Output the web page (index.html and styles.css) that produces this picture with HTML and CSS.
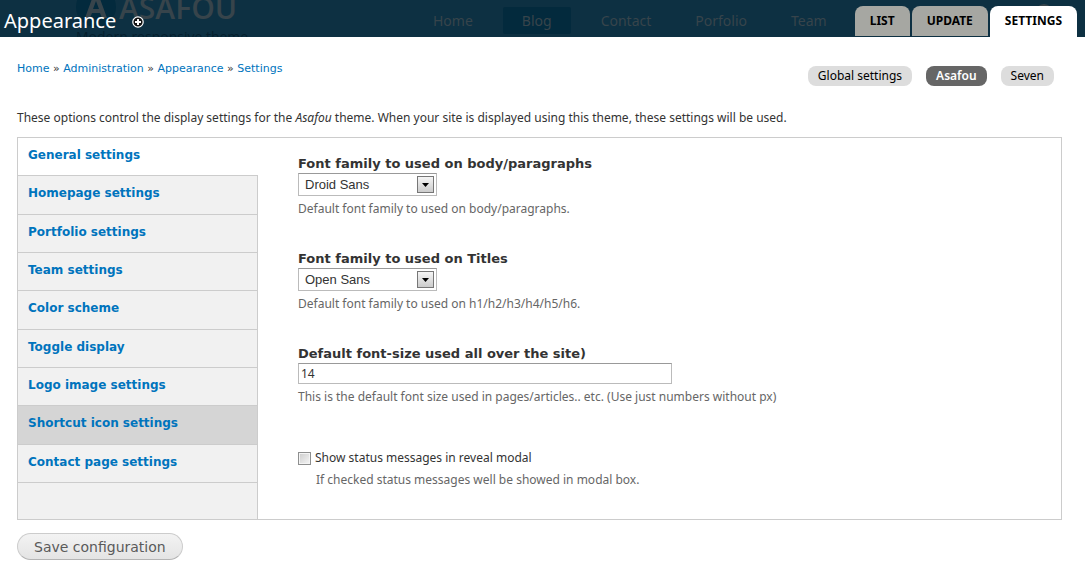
FILE: index.html
```html
<!DOCTYPE html>
<html lang="en">
<head>
<meta charset="utf-8">
<title>Appearance</title>
<meta name="viewport" content="width=device-width, initial-scale=1">
<link rel="stylesheet" href="styles.css">
</head>
<body>
<header class="branding">
  <div class="site-behind">
    <div class="site-logo">
      <svg class="logo-mark" viewBox="0 0 40 34" aria-hidden="true"><circle cx="20" cy="7" r="20" fill="#032a3d"/><path d="M9 18 17 -4H23L31 18H26L24 13H16L14 18ZM17 9H23L20 1Z" fill="#37444b"/></svg>
      <span class="logo-name">ASAFOU</span>
      <span class="slogan">Modern responsive theme</span>
    </div>
    <nav class="site-nav">
      <a href="#">Home</a>
      <a href="#" class="current">Blog</a>
      <a href="#">Contact</a>
      <a href="#">Porfolio</a>
      <a href="#">Team</a>
    </nav>
    <span class="site-dot"></span>
  </div>
  <div class="title-row">
    <h1>Appearance</h1>
    <a href="#" class="shortcut" aria-label="Add to shortcuts">
      <svg width="12" height="12" viewBox="0 0 12 12"><circle cx="6" cy="6" r="5.2" fill="#111" stroke="#fff" stroke-width="1.2"/><path d="M6 3v6M3 6h6" stroke="#fff" stroke-width="2"/></svg>
    </a>
  </div>
  <nav class="primary-tabs">
    <a href="#">LIST</a>
    <a href="#">UPDATE</a>
    <a href="#" class="active">SETTINGS</a>
  </nav>
</header>
<main class="page">
  <div class="top-row">
    <nav class="breadcrumb"><a href="#">Home</a> » <a href="#">Administration</a> » <a href="#">Appearance</a> » <a href="#">Settings</a></nav>
    <nav class="secondary-tabs">
      <a href="#">Global settings</a>
      <a href="#" class="active">Asafou</a>
      <a href="#">Seven</a>
    </nav>
  </div>
  <p class="intro">These options control the display settings for the <em>Asafou</em> theme. When your site is displayed using this theme, these settings will be used.</p>
  <form>
    <div class="vertical-tabs">
      <nav class="tab-list">
        <a href="#" class="selected">General settings</a>
        <a href="#">Homepage settings</a>
        <a href="#">Portfolio settings</a>
        <a href="#">Team settings</a>
        <a href="#">Color scheme</a>
        <a href="#">Toggle display</a>
        <a href="#">Logo image settings</a>
        <a href="#" class="hovered">Shortcut icon settings</a>
        <a href="#">Contact page settings</a>
      </nav>
      <div class="pane">
        <div class="field">
          <label for="body-font">Font family to used on body/paragraphs</label>
          <div class="select-box">
            <select id="body-font"><option>Droid Sans</option></select>
            <svg class="arrow" viewBox="0 0 15 15" aria-hidden="true"><path d="M4 6h7L7.500 10Z"/></svg>
          </div>
          <p class="description">Default font family to used on body/paragraphs.</p>
        </div>
        <div class="field">
          <label for="title-font">Font family to used on Titles</label>
          <div class="select-box">
            <select id="title-font"><option>Open Sans</option></select>
            <svg class="arrow" viewBox="0 0 15 15" aria-hidden="true"><path d="M4 6h7L7.500 10Z"/></svg>
          </div>
          <p class="description">Default font family to used on h1/h2/h3/h4/h5/h6.</p>
        </div>
        <div class="field">
          <label for="font-size">Default font-size used all over the site)</label>
          <input type="text" id="font-size" value="14">
          <p class="description">This is the default font size used in pages/articles.. etc. (Use just numbers without px)</p>
        </div>
        <div class="field check-field">
          <div class="check-row">
            <input type="checkbox" id="reveal">
            <label for="reveal">Show status messages in reveal modal</label>
          </div>
          <p class="description">If checked status messages well be showed in modal box.</p>
        </div>
      </div>
    </div>
    <button type="submit" class="save">Save configuration</button>
  </form>
</main>
</body>
</html>
```
FILE: styles.css
```css
* { box-sizing: border-box; }
body {
  margin: 0;
  background: #fff;
  color: #333;
  font: 12px/18px "Noto Sans", sans-serif;
}
a { color: #0074bd; text-decoration: none; }
p, h1 { margin: 0; }

.branding {
  position: relative;
  display: flex;
  justify-content: space-between;
  align-items: flex-end;
  height: 37px;
  padding-right: 8px;
  background: #0d3042;
  overflow: hidden;
}
.title-row { position: relative; display: flex; align-items: center; gap: 16px; padding: 0 4px 4px; }
.title-row h1 { color: #fff; font: 20px/24px "Noto Sans", sans-serif; }
.shortcut { display: flex; padding-top: 2px; }
.primary-tabs { position: relative; display: flex; gap: 2px; }
.primary-tabs a {
  height: 30px;
  margin-bottom: 1px;
  padding: 0 15px;
  border-radius: 8px 8px 0 0;
  background: #a6a7a2;
  color: #000;
  font: bold 12px/30px "Noto Sans", sans-serif;
}
.primary-tabs .active { height: 31px; margin-bottom: 0; background: #fff; }

.site-behind { position: absolute; inset: 0; font-family: "Open Sans", sans-serif; }
.site-logo { position: absolute; left: 76px; top: 0; }
.logo-mark { position: absolute; left: 0; top: 0; width: 40px; height: 34px; }
.logo-name { position: absolute; left: 43px; top: -12px; color: #37444b; font-size: 30px; line-height: 40px; font-weight: 600; }
.slogan { position: absolute; left: 0; top: 28px; color: #061f2d; font-size: 14px; line-height: 18px; white-space: nowrap; }
.site-nav { position: absolute; left: 419px; top: 7px; display: flex; gap: 16px; }
.site-nav a { padding: 0 14px; border-radius: 2px; color: #37444b; font: 14px/27px "Noto Sans", sans-serif; }
.site-nav .current { padding: 0 19px; background: #032a3d; }
.site-dot { position: absolute; right: 32px; top: 4px; width: 18px; height: 18px; border-radius: 50%; background: #37444b; }

.page { padding: 22px 23px 0 17px; }
.top-row { display: flex; justify-content: space-between; align-items: flex-start; height: 50px; }
.breadcrumb { font: 11px/20px "DejaVu Sans", sans-serif; }
.secondary-tabs { display: flex; gap: 14px; padding: 7px 8px 0 0; }
.secondary-tabs a {
  padding: 0 10px;
  border-radius: 8px;
  background: #ddd;
  color: #000;
  line-height: 20px;
}
.secondary-tabs .active { background: #666; color: #fff; font-weight: 600; }
.intro { padding-bottom: 10px; }

.vertical-tabs {
  display: grid;
  grid-template-columns: 240px 1fr;
  border: 1px solid #ccc;
}
.tab-list {
  display: grid;
  grid-template-rows: repeat(9, 1fr) 36px;
  background: linear-gradient(#ccc, #ccc) right / 1px 100% no-repeat #f1f1f1;
}
.tab-list a {
  padding: 8px 10px;
  margin-right: 1px;
  border-bottom: 1px solid #ccc;
  font: bold 12px/18px "DejaVu Sans", sans-serif;
}
.tab-list .selected { margin-right: 0; background: #fff; }
.tab-list .hovered { background: #d5d5d5; }

.pane { padding: 16px 40px 30px; }
.field { padding-bottom: 31px; }
.field > label { display: block; font: bold 13px/19px "DejaVu Sans", sans-serif; }
.description { color: #666; padding-top: 4px; }
.select-box { position: relative; width: 139px; height: 23px; }
.select-box select {
  display: block;
  width: 100%;
  height: 100%;
  padding: 0 24px 0 6px;
  border: 1px solid #bbb;
  border-top-color: #999;
  border-radius: 0;
  background: #fff;
  color: #333;
  font: 13px "Liberation Sans", sans-serif;
  appearance: none;
}
.arrow {
  position: absolute;
  right: 3px;
  top: 3px;
  width: 17px;
  height: 17px;
  border: 1px solid #777;
  background: linear-gradient(#f5f5f5, #ccc);
  pointer-events: none;
}
input[type="text"] {
  display: block;
  width: 374px;
  max-width: 100%;
  height: 21px;
  padding: 0 2px;
  border: 1px solid #bbb;
  border-top-color: #999;
  color: #333;
  font: 12px "Noto Sans", sans-serif;
}
.check-field { padding: 12px 0 0; }
.check-row { display: flex; align-items: center; gap: 4px; }
.check-row input {
  width: 13px;
  height: 13px;
  margin: 0;
  border: 1px solid #8e8f8f;
  background: linear-gradient(135deg, #ccc, #f6f6f6);
  box-shadow: inset 0 0 0 1px #f4f4f4;
  appearance: none;
}
.check-field .description { padding-left: 18px; }
.save {
  display: block;
  height: 27px;
  margin-top: 13px;
  padding: 0 16px;
  border: 1px solid #ccc;
  border-bottom-color: #b4b4b4;
  border-radius: 14px;
  background: linear-gradient(#f3f3f3, #e4e4e4);
  color: #5a5a5a;
  font: 14px/20px "DejaVu Sans", sans-serif;
}
```
